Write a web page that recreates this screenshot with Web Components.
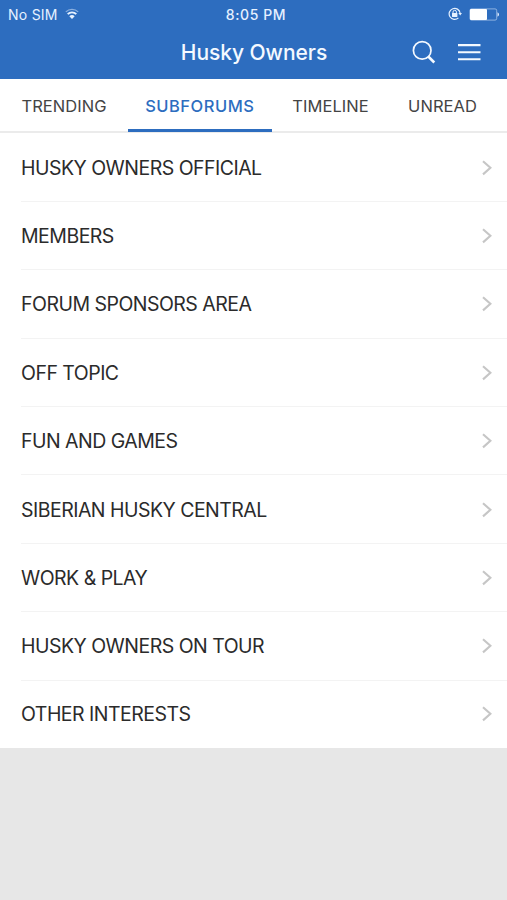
<!DOCTYPE html>
<html lang="en">
<head>
<meta charset="utf-8">
<meta name="viewport" content="width=device-width, initial-scale=1">
<title>Husky Owners</title>
<style>
  :root {
    --clr-primary: #2d6dbf;
    --clr-text: #2b2b2b;
    --clr-line: #f3f3f3;
    --clr-chevron: #c6c6c6;
  }

  body {
    margin: 0;
    height: 900px;
    overflow: hidden;
    background-color: #e7e7e7;
    font-family: Inter, "Liberation Sans", sans-serif;
    color: var(--clr-text);
  }
</style>
</head>
<body>
<forum-app></forum-app>

<script>
const define = (name, html) => {
  const template = document.createElement("template");
  template.innerHTML = html;

  customElements.define(name, class extends HTMLElement {
    constructor() {
      super();
      this.root = this.attachShadow({ mode: "open" });
      this.root.appendChild(template.content.cloneNode(true));
    }
  });
};

define("status-bar", /* html */ `
  <style>
    :host {
      display: grid;
      grid-template-columns: 1fr auto 1fr;
      align-items: center;
      height: 27px;
      padding: 0 7px 0 8px;
      font-size: 14px;
      line-height: 27px;
      color: #e6f1ff;
    }

    div {
      display: flex;
      align-items: center;
    }

    .carrier {
      gap: 7.5px;
      letter-spacing: 0.25px;
    }

    .time {
      font-size: 14px;
      font-weight: 500;
      letter-spacing: 0.6px;
      padding: 1px 0 0 4px;
    }

    .power {
      justify-content: flex-end;
      gap: 7px;
    }

    svg {
      display: block;
    }
  </style>
  <div class="carrier">
    <span>No SIM</span>
    <svg width="14" height="12" viewBox="0 0 14 12" fill="none" stroke="currentColor">
      <path d="M0.8 3.9a8.8 8.8 0 0 1 12.4 0" stroke-width="1.3" opacity="0.5"/>
      <path d="M2.7 6.2a6 6 0 0 1 8.6 0" stroke-width="1.9"/>
      <path d="M7 10.9 4.3 8.3a3.8 3.8 0 0 1 5.4 0z" fill="currentColor" stroke="none"/>
    </svg>
  </div>
  <div class="time">8:05 PM</div>
  <div class="power">
    <svg width="14" height="14" viewBox="0 0 14 14" fill="none" stroke="currentColor">
      <path d="M12.1 6A5.5 5.5 0 1 0 10.4 10.9" stroke-width="1.2"/>
      <path d="M10.4 6h3.6l-1.8 2.6z" fill="currentColor" stroke="none"/>
      <path d="M5 6.3V5a1.7 1.7 0 0 1 3.4 0v1.3" stroke-width="1"/>
      <rect x="4" y="5.9" width="5.4" height="4" rx="0.4" fill="currentColor" stroke="none"/>
    </svg>
    <svg width="31" height="13" viewBox="0 0 31 13">
      <rect x="0.9" y="0.9" width="26.8" height="11.2" rx="1.6" fill="none" stroke="currentColor" stroke-width="0.8" opacity="0.65"/>
      <rect x="1" y="1" width="17" height="11" rx="1" fill="#fff"/>
      <path d="M28.5 4.3c2 .8 2 3.6 0 4.4z" fill="currentColor"/>
    </svg>
  </div>
`);

define("nav-bar", /* html */ `
  <style>
    :host {
      display: grid;
      grid-template-columns: 1fr auto 1fr;
      align-items: center;
      height: 50px;
      padding: 0 26px;
      color: #f4f9ff;
    }

    h1 {
      margin: 0;
      padding: 2px 0 0 1px;
      font-size: 21px;
      font-weight: 500;
      line-height: 48px;
      letter-spacing: -0.05px;
    }

    .actions {
      display: flex;
      justify-content: flex-end;
      align-items: center;
      gap: 22px;
    }

    svg {
      display: block;
    }
  </style>
  <span></span>
  <h1><slot></slot></h1>
  <div class="actions">
    <svg width="24" height="24" viewBox="0 0 24 24" fill="none" stroke="currentColor" aria-label="Search">
      <circle cx="10.2" cy="10.4" r="8.8" stroke-width="1.7"/>
      <path d="M16.3 16.5l6 6" stroke-width="2.6"/>
    </svg>
    <svg width="23" height="18" viewBox="0 0 23 18" fill="none" stroke="currentColor" stroke-width="2.1" aria-label="Menu">
      <path d="M0 2.1h22.5M0 9.2h22.5M0 16.2h22.5"/>
    </svg>
  </div>
`);

define("tab-bar", /* html */ `
  <style>
    :host {
      display: flex;
      box-sizing: border-box;
      height: 54.5px;
      background: linear-gradient(#ebebeb, #ebebeb) 0 52px / 100% 2px no-repeat #fff;
    }
  </style>
  <slot></slot>
`);

define("tab-item", /* html */ `
  <style>
    :host {
      display: block;
      box-sizing: border-box;
      height: 53px;
      border-bottom: 3px solid transparent;
      font-size: 16.5px;
      line-height: 54px;
      text-align: center;
      white-space: nowrap;
      letter-spacing: 0.05px;
      color: #444;
    }

    :host([active]) {
      border-color: var(--clr-primary);
      font-weight: 500;
      letter-spacing: 0.5px;
      color: var(--clr-primary);
    }
  </style>
  <slot></slot>
`);

define("forum-row", /* html */ `
  <style>
    :host {
      display: block;
      padding-left: 21px;
      background-color: #fff;
    }

    .row {
      display: flex;
      box-sizing: border-box;
      justify-content: space-between;
      align-items: center;
      height: 68.4px;
      padding: 1px 14px 0 0;
      border-bottom: 1px solid var(--clr-line);
      font-size: 19.5px;
      letter-spacing: -0.52px;
    }

    :host(:last-of-type) .row {
      height: 67.5px;
      border-color: transparent;
    }
  </style>
  <div class="row">
    <slot></slot>
    <svg width="12" height="16" viewBox="0 0 12 16" fill="none" stroke="var(--clr-chevron)" stroke-width="2.1">
      <path d="M2 1.2l7.4 6.6L2 14.4"/>
    </svg>
  </div>
`);

define("forum-app", /* html */ `
  <style>
    :host {
      display: block;
    }

    header {
      height: 79px;
      background-color: var(--clr-primary);
    }
  </style>
  <header>
    <status-bar></status-bar>
    <nav-bar>Husky Owners</nav-bar>
  </header>
  <tab-bar>
    <tab-item style="width: 128px">TRENDING</tab-item>
    <tab-item style="width: 143.5px" active>SUBFORUMS</tab-item>
    <tab-item style="width: 118px">TIMELINE</tab-item>
    <tab-item style="width: 106px">UNREAD</tab-item>
  </tab-bar>
  <main>
    <forum-row>HUSKY OWNERS OFFICIAL</forum-row>
    <forum-row>MEMBERS</forum-row>
    <forum-row>FORUM SPONSORS AREA</forum-row>
    <forum-row>OFF TOPIC</forum-row>
    <forum-row>FUN AND GAMES</forum-row>
    <forum-row>SIBERIAN HUSKY CENTRAL</forum-row>
    <forum-row>WORK &amp; PLAY</forum-row>
    <forum-row>HUSKY OWNERS ON TOUR</forum-row>
    <forum-row>OTHER INTERESTS</forum-row>
  </main>
`);
</script>
</body>
</html>
